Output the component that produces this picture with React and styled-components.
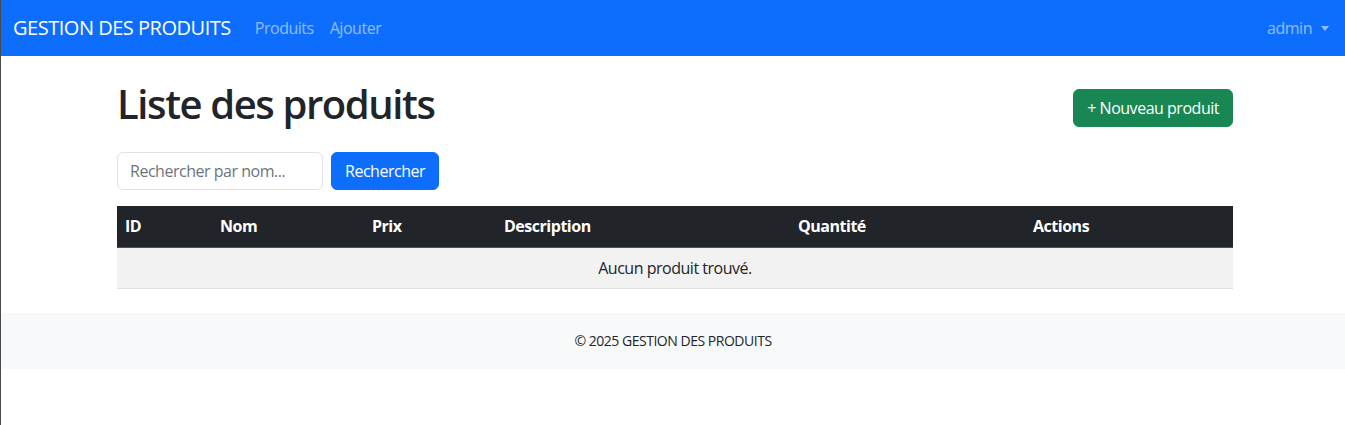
import styled, { createGlobalStyle } from 'styled-components';
import { useState } from "react";

const GlobalStyle = createGlobalStyle`
    html, body {
        margin: 0;
        padding: 0;
        background: #fff;
    }
    body {
        font-family: "Segoe UI", "Open Sans", "Liberation Sans", sans-serif;
        font-size: 16px;
        line-height: 1.5;
        letter-spacing: -0.03em;
        color: #212529;
        border-left: 1px solid #4a4a4a;
        min-height: 425px;
        box-sizing: border-box;
    }
    * {
        box-sizing: border-box;
    }
`

const colonnes = [
    { label: 'ID', width: 95 },
    { label: 'Nom', width: 152 },
    { label: 'Prix', width: 132 },
    { label: 'Description', width: 294 },
    { label: 'Quantité', width: 235 },
    { label: 'Actions', width: 208 },
];

export default function App(){
    const [recherche, setRecherche] = useState('');

    return (
        <>
            <GlobalStyle />
            <Navbar>
                <Brand href="#">GESTION DES PRODUITS</Brand>
                <NavLinks>
                    <NavLink href="#">Produits</NavLink>
                    <NavLink href="#">Ajouter</NavLink>
                </NavLinks>
                <Dropdown href="#">admin<Caret /></Dropdown>
            </Navbar>

            <Container>
                <Header>
                    <Titre>Liste des produits</Titre>
                    <Button $color="#198754">+ Nouveau produit</Button>
                </Header>

                <Recherche>
                    <Input type="text" placeholder="Rechercher par nom..." value={recherche} onChange={(e) => setRecherche(e.target.value)}/>
                    <Button $color="#0d6efd">Rechercher</Button>
                </Recherche>

                <Table>
                    <thead>
                        <tr>
                            {colonnes.map(c => (
                                <Th key={c.label} style={{ width: c.width }}>{c.label}</Th>
                            ))}
                        </tr>
                    </thead>
                    <tbody>
                        <tr>
                            <Vide colSpan={6}>Aucun produit trouvé.</Vide>
                        </tr>
                    </tbody>
                </Table>
            </Container>

            <Footer>© 2025 GESTION DES PRODUITS</Footer>
        </>
    )
}

const Navbar = styled.nav`
    display: flex;
    align-items: center;
    height: 56px;
    padding: 0 16px 0 12px;
    background: #0d6efd;
`
const Brand = styled.a`
    font-size: 20px;
    color: #fff;
    text-decoration: none;
    margin-right: 16px;
    white-space: nowrap;
`
const NavLinks = styled.div`
    display: flex;
`
const NavLink = styled.a`
    color: rgba(255, 255, 255, 0.55);
    text-decoration: none;
    padding: 8px;
`
const Dropdown = styled.a`
    margin-left: auto;
    display: flex;
    align-items: center;
    color: rgba(255, 255, 255, 0.55);
    text-decoration: none;
`
const Caret = styled.span`
    margin-left: 9px;
    border-top: 5px solid rgba(255, 255, 255, 0.55);
    border-left: 4px solid transparent;
    border-right: 4px solid transparent;
`
const Container = styled.main`
    width: 1116px;
    margin-left: calc(50% - 556px);
    padding-top: 24px;
`
const Header = styled.div`
    display: flex;
    justify-content: space-between;
    align-items: center;
    margin-bottom: 16px;
`
const Titre = styled.h1`
    margin: 0 0 8px;
    font-size: 40px;
    font-weight: 600;
    line-height: 1.2;
    letter-spacing: -0.035em;
    color: #212529;
`
const Button = styled.button`
    height: 38px;
    padding: 0 13px;
    border: 1px solid ${p => p.$color};
    border-radius: 6px;
    background: ${p => p.$color};
    color: #fff;
    font-family: inherit;
    font-size: 16px;
    letter-spacing: inherit;
`
const Recherche = styled.form`
    display: flex;
    gap: 8px;
    margin-bottom: 16px;
`
const Input = styled.input`
    width: 206px;
    height: 38px;
    padding: 0 12px;
    border: 1px solid #dee2e6;
    border-radius: 6px;
    font-family: inherit;
    font-size: 16px;
    letter-spacing: inherit;
    color: #212529;
    &::placeholder {
        color: #6c757d;
    }
`
const Table = styled.table`
    width: 100%;
    border-collapse: collapse;
    table-layout: fixed;
`
const Th = styled.th`
    text-align: left;
    padding: 8px;
    height: 41px;
    background: #212529;
    color: #fff;
    font-weight: 700;
    border-bottom: 1px solid #4d5154;
`
const Vide = styled.td`
    text-align: center;
    padding: 8px;
    height: 39px;
    background: #f2f2f2;
    border-bottom: 1px solid #dee2e6;
`
const Footer = styled.footer`
    margin-top: 24px;
    height: 56px;
    display: flex;
    align-items: center;
    justify-content: center;
    background: #f8f9fa;
    font-size: 14px;
    color: #212529;
`
